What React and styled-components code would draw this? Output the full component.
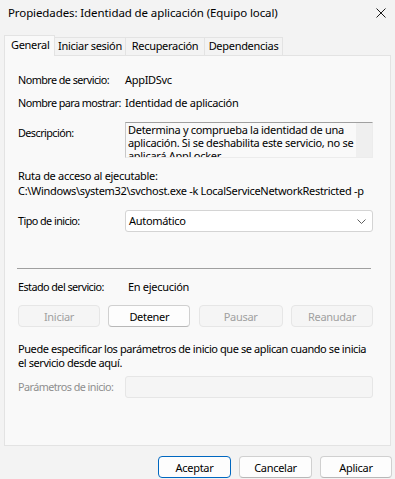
import styled, { createGlobalStyle } from 'styled-components';

const GlobalStyle = createGlobalStyle`
  html, body { margin: 0; padding: 0; background: #f3f3f3; }
  body {
    font-family: 'Segoe UI', 'Noto Sans', sans-serif;
    font-size: 11px;
    letter-spacing: -0.3px;
    color: #000;
  }
`;

const Window = styled.div`
  width: 395px;
  height: 479px;
  display: flex;
  flex-direction: column;
  background: #f3f3f3;
  overflow: hidden;
`;

const TitleBar = styled.div`
  height: 35px;
  box-sizing: border-box;
  padding: 5px 9px 0 8px;
  display: flex;
  justify-content: space-between;
  align-items: flex-start;
  line-height: 16px;
  font-size: 11.5px;
  letter-spacing: -0.1px;
`;

const CloseIcon = styled.svg`
  margin-top: 3px;
  width: 10px;
  height: 10px;
`;

const TabStrip = styled.div`
  display: flex;
  align-items: flex-end;
  height: 21px;
  padding-left: 4px;
  margin-bottom: -1px;
  position: relative;
  z-index: 1;
`;

const Tab = styled.div`
  box-sizing: border-box;
  width: ${p => p.w}px;
  height: ${p => (p.active ? '21px' : '18px')};
  margin-bottom: ${p => (p.active ? '0' : '1px')};
  padding-left: ${p => (p.active ? '6px' : '0')};
  text-align: ${p => (p.active ? 'left' : 'center')};
  border: 1px solid #e3e3e3;
  border-bottom: none;
  margin-left: ${p => (p.first ? '0' : '-1px')};
  background: ${p => (p.active ? '#f9f9f9' : '#f3f3f3')};
  line-height: ${p => (p.active ? '18px' : '16px')};
  white-space: nowrap;
`;

const Panel = styled.div`
  height: 391px;
  margin: 0 4px;
  box-sizing: border-box;
  border: 1px solid #e3e3e3;
  background: #f9f9f9;
  padding: 0 17px 0 13px;
  display: flex;
  flex-direction: column;
`;

const Row = styled.div`
  display: flex;
  align-items: ${p => (p.top ? 'flex-start' : 'center')};
  margin-top: ${p => p.gap}px;
  line-height: 16px;
`;

const Label = styled.div`
  width: 107px;
  flex: none;
  white-space: nowrap;
  font-size: 10.8px;
  letter-spacing: -0.55px;
  color: ${p => (p.disabled ? '#8f8f8f' : '#000')};
  padding-top: ${p => p.offset || 0}px;
`;

const Value = styled.div`
  padding-left: ${p => p.indent || 0}px;
  white-space: nowrap;
`;

const DescBox = styled.div`
  flex: 1;
  height: 36px;
  box-sizing: border-box;
  border-top: 1px solid #a0a0a0;
  border-left: 1px solid #c8c8c8;
  border-right: 1px solid #ececec;
  border-bottom: 1px solid #ececec;
  background: #f9f9f9;
  display: flex;
  overflow: hidden;
`;

const DescText = styled.div`
  flex: 1;
  padding: 0 2px;
  line-height: 13px;
  overflow: hidden;
`;

const ScrollTrack = styled.div`
  width: 16px;
  flex: none;
  background: #efefef;
`;

const TextBlock = styled.div`
  margin-top: ${p => p.gap}px;
  line-height: ${p => p.lh}px;
  white-space: ${p => (p.nowrap ? 'nowrap' : 'normal')};
  letter-spacing: ${p => (p.tight ? '-0.42px' : 'inherit')};
`;

const Combo = styled.div`
  flex: 1;
  height: 22px;
  box-sizing: border-box;
  border: 1px solid #d4d4d4;
  border-radius: 3px;
  background: #fff;
  display: flex;
  align-items: center;
  justify-content: space-between;
  padding: 0 6px 0 3px;
`;

const Separator = styled.div`
  height: 1px;
  background: #a0a0a0;
  margin-top: ${p => p.gap}px;
  margin-left: -1px;
  margin-right: 2px;
`;

const ButtonRow = styled.div`
  display: flex;
  justify-content: space-between;
  margin-top: ${p => p.gap}px;
`;

const Button = styled.button`
  box-sizing: border-box;
  width: ${p => p.w || 82}px;
  height: 22px;
  padding: 0;
  font: inherit;
  letter-spacing: inherit;
  border-radius: 4px;
  border: 1px solid ${p => (p.primary ? '#0067c0' : p.disabled ? '#e6e6e6' : '#d0d0d0')};
  border-bottom-color: ${p => (p.primary ? '#0067c0' : p.disabled ? '#e6e6e6' : '#b8b8b8')};
  background: ${p => (p.disabled ? '#f5f5f5' : '#fdfdfd')};
  color: ${p => (p.disabled ? '#a0a0a0' : '#000')};
`;

const Input = styled.div`
  flex: 1;
  height: 22px;
  box-sizing: border-box;
  border: 1px solid #e6e6e6;
  border-radius: 3px;
  background: #f5f5f5;
`;

const Footer = styled.div`
  display: flex;
  justify-content: flex-end;
  gap: 8px;
  padding: 10px 3px 0 0;
`;

const Chevron = () => (
  <svg width="9" height="5" viewBox="0 0 9 5">
    <path d="M0.5 0.5 L4.5 4.5 L8.5 0.5" fill="none" stroke="#5f5f5f" strokeWidth="1" />
  </svg>
);

export default function App() {
  return (
    <>
      <GlobalStyle />
      <Window>
        <TitleBar>
          <span>Propiedades: Identidad de aplicación (Equipo local)</span>
          <CloseIcon viewBox="0 0 10 10">
            <path d="M0.5 0.5 L9.5 9.5 M9.5 0.5 L0.5 9.5" stroke="#1a1a1a" strokeWidth="1" />
          </CloseIcon>
        </TitleBar>

        <TabStrip>
          <Tab active first w={51}>General</Tab>
          <Tab w={72}>Iniciar sesión</Tab>
          <Tab w={80}>Recuperación</Tab>
          <Tab w={79}>Dependencias</Tab>
        </TabStrip>

        <Panel>
          <Row gap={16}>
            <Label>Nombre de servicio:</Label>
            <Value>AppIDSvc</Value>
          </Row>
          <Row gap={7}>
            <Label>Nombre para mostrar:</Label>
            <Value>Identidad de aplicación</Value>
          </Row>
          <Row gap={11} top>
            <Label offset={3}>Descripción:</Label>
            <DescBox>
              <DescText>
                Determina y comprueba la identidad de una aplicación. Si se deshabilita este servicio, no se aplicará AppLocker.
              </DescText>
              <ScrollTrack />
            </DescBox>
          </Row>
          <TextBlock gap={10} lh={15}>Ruta de acceso al ejecutable:</TextBlock>
          <TextBlock gap={0} lh={15} nowrap>
            C:\Windows\system32\svchost.exe -k LocalServiceNetworkRestricted -p
          </TextBlock>
          <Row gap={12}>
            <Label>Tipo de inicio:</Label>
            <Combo>
              <span>Automático</span>
              <Chevron />
            </Combo>
          </Row>
          <Separator gap={36} />
          <Row gap={10}>
            <Label>Estado del servicio:</Label>
            <Value indent={3}>En ejecución</Value>
          </Row>
          <ButtonRow gap={10}>
            <Button disabled>Iniciar</Button>
            <Button>Detener</Button>
            <Button disabled w={84}>Pausar</Button>
            <Button disabled>Reanudar</Button>
          </ButtonRow>
          <TextBlock gap={15} lh={14} tight>
            Puede especificar los parámetros de inicio que se aplican cuando se inicia el servicio desde aquí.
          </TextBlock>
          <Row gap={6}>
            <Label disabled>Parámetros de inicio:</Label>
            <Input />
          </Row>
        </Panel>

        <Footer>
          <Button primary w={73}>Aceptar</Button>
          <Button w={73}>Cancelar</Button>
          <Button w={72}>Aplicar</Button>
        </Footer>
      </Window>
    </>
  );
}
